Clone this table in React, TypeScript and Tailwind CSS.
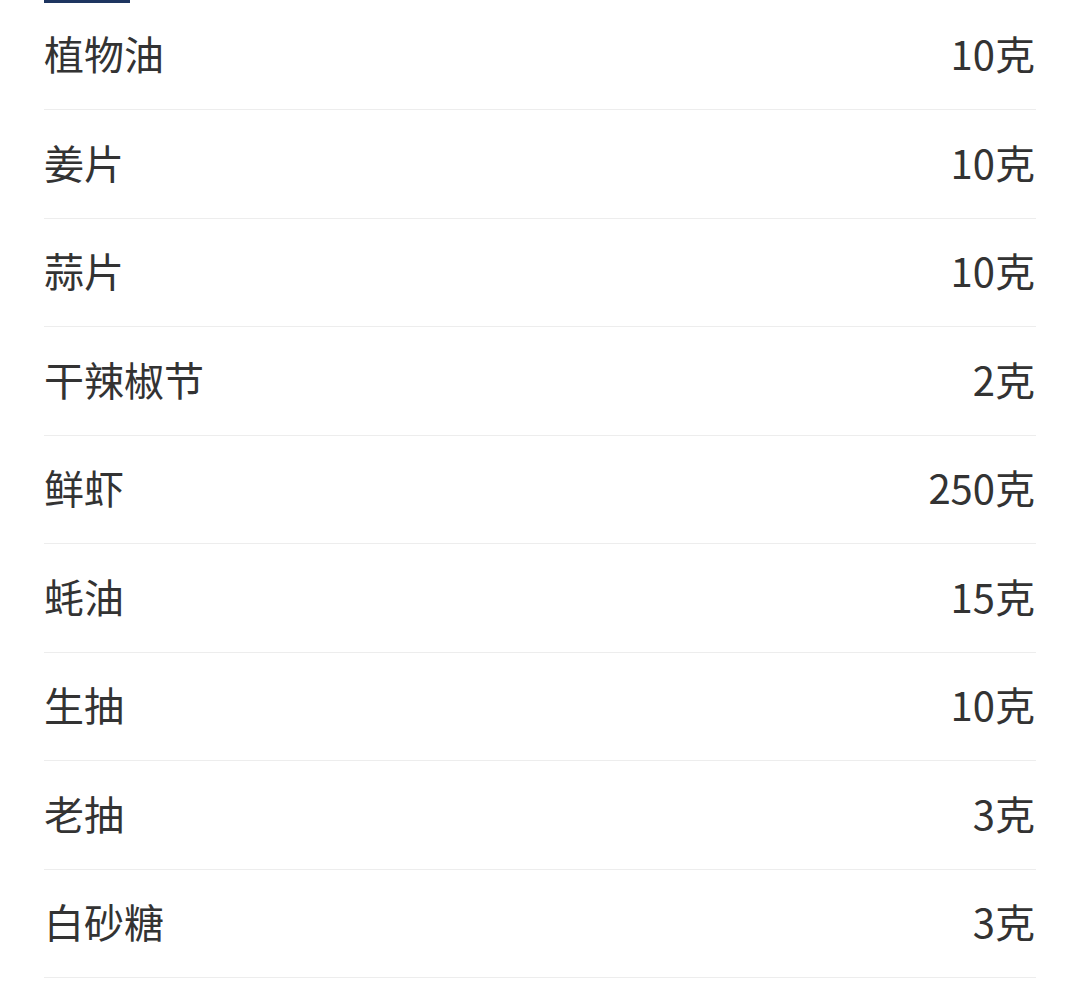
const items = [
  { name: "植物油", amount: "10克" },
  { name: "姜片", amount: "10克" },
  { name: "蒜片", amount: "10克" },
  { name: "干辣椒节", amount: "2克" },
  { name: "鲜虾", amount: "250克" },
  { name: "蚝油", amount: "15克" },
  { name: "生抽", amount: "10克" },
  { name: "老抽", amount: "3克" },
  { name: "白砂糖", amount: "3克" },
];

const App = () => {
  return (
    <div className="w-[1080px] h-[981px] overflow-hidden bg-white font-['Noto_Sans_CJK_SC','Noto_Sans',sans-serif] text-[#333333]">
      {/* tab underline */}
      <div className="ml-[44px] w-[86px] h-[3px] bg-[#1e3560]"></div>
      <ul className="mx-[44px] -mt-[1.5px]">
        {items.map((item) => (
          <li
            key={item.name}
            className="h-[108.5px] pb-[4px] flex items-center justify-between border-b border-[#ededed] text-[40px] leading-none"
          >
            <span>{item.name}</span>
            <span className="pr-[1px]">{item.amount}</span>
          </li>
        ))}
      </ul>
    </div>
  );
};

export default App;
